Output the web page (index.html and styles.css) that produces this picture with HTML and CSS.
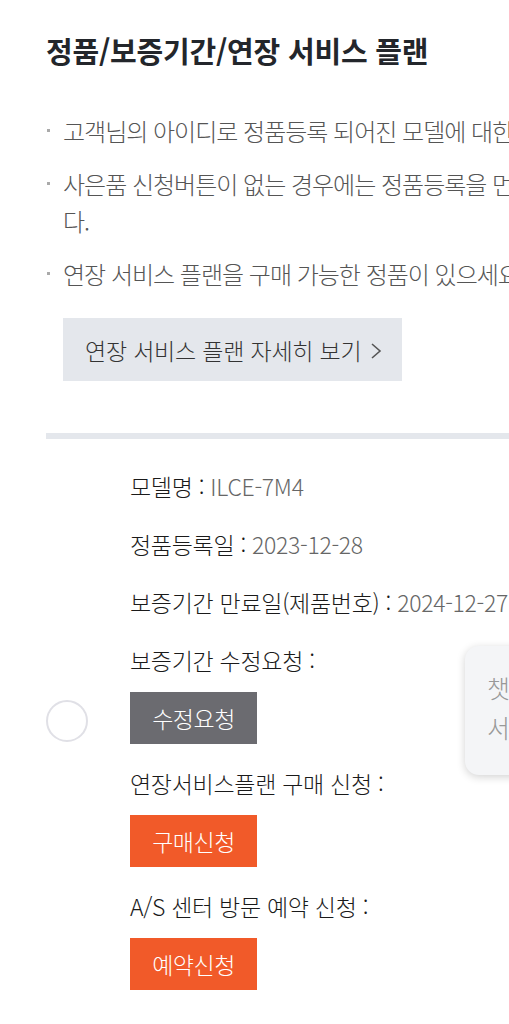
FILE: index.html
```html
<!DOCTYPE html>
<html lang="ko">
<head>
  <meta charset="UTF-8" />
  <meta name="viewport" content="width=device-width, initial-scale=1.0" />
  <title>정품/보증기간/연장 서비스 플랜</title>
  <link rel="stylesheet" href="styles.css">
</head>
<body>
  <div class="page">
    <h2 class="title">정품/보증기간/연장 서비스 플랜</h2>

    <ul class="notice">
      <li>고객님의 아이디로 정품등록 되어진 모델에 대한 정보입니다.</li>
      <li>사은품 신청버튼이 없는 경우에는 정품등록을 먼저 진행하신 후 신청해 주시기 바랍니<br>다.</li>
      <li>연장 서비스 플랜을 구매 가능한 정품이 있으세요? 지금 바로 신청하세요.</li>
    </ul>

    <a class="plan-link" href="#">연장 서비스 플랜 자세히 보기
      <svg class="chevron" width="12" height="20" viewBox="0 0 12 20"><path d="M2 3l8 7-8 7" fill="none" stroke="#555" stroke-width="1.6"/></svg>
    </a>

    <div class="divider"></div>

    <div class="product">
      <span class="radio"></span>
      <div class="info">
        <p class="row">모델명 : <span class="val">ILCE-7M4</span></p>
        <p class="row">정품등록일 : <span class="val">2023-12-28</span></p>
        <p class="row">보증기간 만료일(제품번호) : <span class="val">2024-12-27 (1234567)</span></p>
        <p class="row row-tight">보증기간 수정요청 :</p>
        <button class="btn btn-gray">수정요청</button>
        <p class="row row-tight">연장서비스플랜 구매 신청 :</p>
        <button class="btn btn-orange">구매신청</button>
        <p class="row row-tight">A/S 센터 방문 예약 신청 :</p>
        <button class="btn btn-orange">예약신청</button>
      </div>
    </div>
  </div>

  <div class="chat-float">챗봇<br>서비스</div>
</body>
</html>
```

FILE: styles.css
```css
body {
  margin: 0;
  padding: 0;
  font-family: "Noto Sans CJK KR", "Noto Sans", sans-serif;
  color: #222;
  background: #fff;
  overflow-x: hidden;
}
.page {
  width: 1100px;
  padding: 30px 0 0 46px;
}
.title {
  margin: 0 0 42px;
  font-size: 29px;
  line-height: 40px;
  font-weight: 700;
  letter-spacing: -0.2px;
  color: #23262b;
}
.notice {
  list-style: none;
  margin: 0 0 26px;
  padding: 0;
}
.notice li {
  position: relative;
  padding-left: 17px;
  margin-bottom: 16px;
  font-size: 24px;
  line-height: 37px;
  font-weight: 300;
  letter-spacing: -1px;
  color: #555;
}
.notice li:last-child {
  margin-bottom: 0;
}
.notice li::before {
  content: "";
  position: absolute;
  left: 1px;
  top: 17px;
  width: 3px;
  height: 3px;
  background: #aaa;
}
.plan-link {
  display: inline-flex;
  align-items: center;
  gap: 9px;
  margin-left: 17px;
  height: 63px;
  padding: 0 20px 0 22px;
  background: #e4e7ec;
  font-size: 23px;
  font-weight: 300;
  letter-spacing: -0.2px;
  color: #333;
  text-decoration: none;
}
.chevron {
  margin-top: 2px;
}
.divider {
  height: 6px;
  margin-top: 52px;
  background: #e4e7ec;
}
.product {
  display: flex;
  align-items: center;
  gap: 42px;
  padding-top: 29px;
}
.radio {
  flex: none;
  width: 38px;
  height: 38px;
  border: 2px solid #e0e0e6;
  border-radius: 50%;
  margin-top: -38px;
}
.info {
  display: flex;
  flex-direction: column;
  align-items: flex-start;
}
.row {
  margin: 0 0 22px;
  font-size: 23px;
  line-height: 36px;
  font-weight: 300;
  letter-spacing: -0.3px;
  color: #1a1a1a;
}
.row-tight {
  margin-bottom: 14px;
}
.val {
  color: #666;
}
.btn {
  width: 127px;
  height: 52px;
  margin-bottom: 21px;
  border: none;
  font-family: inherit;
  font-size: 23px;
  font-weight: 300;
  letter-spacing: -0.5px;
  color: #fff;
  cursor: pointer;
}
.btn-gray {
  background: #6b6b70;
}
.btn-orange {
  background: #f15a29;
}
.chat-float {
  position: absolute;
  left: 465px;
  top: 646px;
  width: 130px;
  height: 129px;
  box-sizing: border-box;
  padding: 21px 0 0 22px;
  border-radius: 14px;
  background: #f4f5f7;
  box-shadow: 0 2px 8px rgba(0, 0, 0, 0.18);
  font-size: 25px;
  line-height: 40px;
  font-weight: 300;
  color: #999;
}
```
